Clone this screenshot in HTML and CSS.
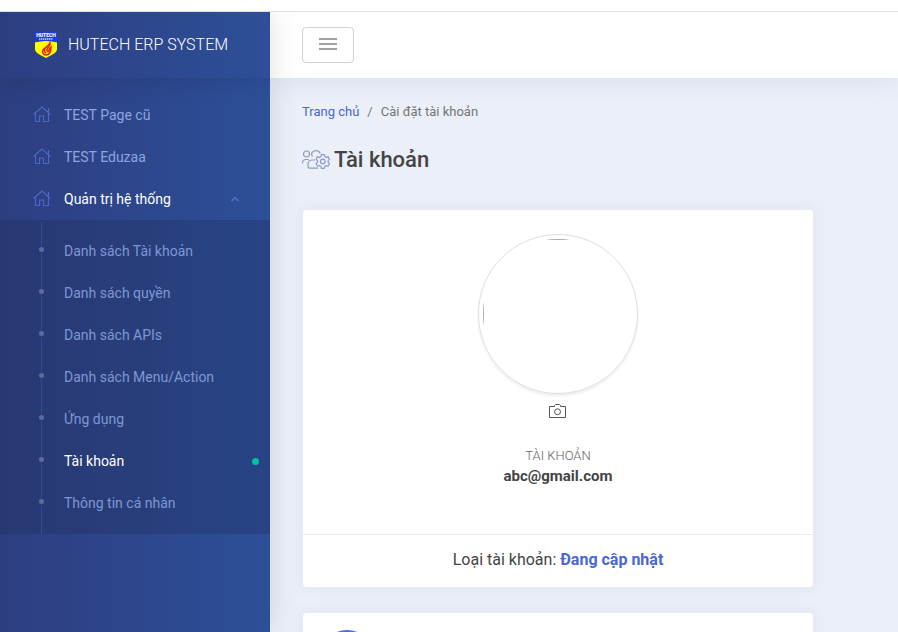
FILE: index.html
```html
<!DOCTYPE html>
<html lang="vi">
<head>
<meta charset="utf-8">
<meta name="viewport" content="width=device-width, initial-scale=1">
<title>Tài khoản</title>
<link rel="stylesheet" href="styles.css">
</head>
<body>
<svg class="sprite" aria-hidden="true">
  <symbol id="home" viewBox="0 0 18 18">
    <path d="M.5 8.500 9 1l8.500 7.500M2.500 7v8.500h4v-5.500h4v5.500h5V7M15.500 6.500V2" fill="none" stroke="currentColor" stroke-width="1.200"/>
  </symbol>
</svg>
<div class="strip"></div>
<div class="app">
  <aside class="sidebar">
    <a class="brand" href="#">
      <svg class="logo" viewBox="0 0 24 26" aria-hidden="true">
        <path d="M1 0h22v17c0 4-6 6.500-11 9-5-2.500-11-5-11-9z" fill="#ff0"/>
        <path d="M1 0h22l.5 1v9.500Q12 7.500.5 10.500V1z" fill="#1d3fd2"/>
        <text x="12" y="5" text-anchor="middle">HUTECH</text>
        <path d="M5 7h14" stroke="#fff" stroke-width="1.500" stroke-dasharray="1.500 .5" opacity=".75"/>
        <path d="M16 11c1 3-3 4-3 7 0 2 2 2 2 0 0-1 1-2 2-3 0 4-1 8-5 8-3 0-4-3-3-5 1-3 6-3 7-7zM12 15c-2 2-2 5 0 6" fill="none" stroke="#f21a10" stroke-width="1.500"/>
      </svg>
      <span>HUTECH ERP SYSTEM</span>
    </a>
    <nav>
      <ul class="menu">
        <li><a class="item" href="#"><svg class="home"><use href="#home"/></svg>TEST Page cũ</a></li>
        <li><a class="item" href="#"><svg class="home"><use href="#home"/></svg>TEST Eduzaa</a></li>
        <li>
          <a class="item open" href="#"><svg class="home"><use href="#home"/></svg>Quản trị hệ thống
            <svg class="caret" viewBox="0 0 8 6" aria-hidden="true"><path d="M.5 5 4 1.500 7.500 5" fill="none" stroke="currentColor" stroke-width="1.200"/></svg>
          </a>
          <ul class="submenu">
            <li><a href="#">Danh sách Tài khoản</a></li>
            <li><a href="#">Danh sách quyền</a></li>
            <li><a href="#">Danh sách APIs</a></li>
            <li><a href="#">Danh sách Menu/Action</a></li>
            <li><a href="#">Ứng dụng</a></li>
            <li><a class="active" href="#" aria-current="page">Tài khoản</a></li>
            <li><a href="#">Thông tin cá nhân</a></li>
          </ul>
        </li>
      </ul>
    </nav>
  </aside>
  <div class="page">
    <header class="topbar">
      <button class="toggle" type="button" aria-label="Menu">
        <svg viewBox="0 0 18 12" aria-hidden="true"><path d="M0 1h18M0 6h18M0 11h18" stroke="#a3a3a3" stroke-width="2"/></svg>
      </button>
    </header>
    <main class="content">
      <nav aria-label="Breadcrumb">
        <ol class="crumbs">
          <li><a href="#">Trang chủ</a></li>
          <li>Cài đặt tài khoản</li>
        </ol>
      </nav>
      <h1 class="title">
        <svg viewBox="0 0 28 20" aria-hidden="true" fill="none" stroke="#8b9cc8" stroke-width="1.200">
          <circle cx="4.500" cy="4" r="3"/>
          <path d="M.6 13.500v-1c0-2 1.500-3 3.500-3h2.500M10.500 6.500C8 3 11 .7 14 .7c2 0 3.500 1 4.200 2.800M13 10H10.500c-2.500 0-4.500 1.500-4.500 4v2.500c0 1 .5 1.600 1.500 1.600h8.500"/>
          <path d="M19.400 4.600h2.800l.6 2 1.300.7 2-.5 1.400 2.400-1.400 1.500v1.500l1.400 1.500-1.400 2.400-2-.5-1.300.7-.6 2h-2.800l-.6-2-1.300-.7-2 .5-1.400-2.400 1.400-1.500v-1.500l-1.400-1.500 1.400-2.400 2 .5 1.300-.7z"/>
          <circle cx="20.800" cy="11.400" r="2.300"/>
        </svg>
        Tài khoản
      </h1>
      <section class="card">
        <div class="profile">
          <div class="avatar"><div class="photo"></div></div>
          <button class="camera" type="button" aria-label="Camera">
            <svg viewBox="0 0 18 14" aria-hidden="true" fill="none" stroke="#555"><path d="M.5 2.500h5v-1l1-1h4l1 1v1h5v11h-16z"/><circle cx="8.500" cy="7.800" r="3"/></svg>
          </button>
          <div class="label">TÀI KHOẢN</div>
          <div class="email">abc@gmail.com</div>
        </div>
        <div class="kind">Loại tài khoản: <a href="#">Đang cập nhật</a></div>
      </section>
      <section class="card next"><div class="badge"></div></section>
    </main>
  </div>
</div>
</body>
</html>
```
FILE: styles.css
```css
* { box-sizing: border-box; }

body {
  margin: 0;
  height: 100vh;
  overflow: hidden;
  display: flex;
  flex-direction: column;
  background: #ebeff8;
  color: #444;
  font: 14px/20px Roboto, "Liberation Sans", sans-serif;
}

ul, ol { list-style: none; margin: 0; padding: 0; }
a { color: #4a67d6; text-decoration: none; }
button { font: inherit; cursor: pointer; }
.sprite { position: absolute; width: 0; height: 0; }

.strip {
  flex: none;
  height: 12px;
  background: #fff;
  border-bottom: 1px solid #e0e1e3;
}

.app { flex: 1; min-height: 0; display: flex; overflow: hidden; }

.sidebar {
  flex: none;
  width: 270px;
  position: relative;
  z-index: 1;
  background: linear-gradient(90deg, #2d3e80, #2d4f98);
  box-shadow: 0 0 28px rgba(0, 0, 0, 0.13);
}

.brand {
  display: flex;
  align-items: center;
  gap: 10px;
  height: 66px;
  padding: 0 32px 0 34px;
  color: #fff;
  font-size: 16px;
  font-weight: 300;
  box-shadow: 0 0 28px rgba(0, 0, 0, 0.13);
  clip-path: inset(0 0 -40px 0);
}
.logo { width: 24px; height: 26px; }
.logo text { fill: #fff; font-size: 5px; font-weight: 900; }

.menu { padding-top: 16px; }
.item {
  display: flex;
  align-items: center;
  height: 42px;
  padding: 0 31px 0 33px;
  color: #8ea6de;
}
.home { width: 18px; height: 18px; margin-right: 13px; color: #4a67c8; }
.item.open { color: #fff; }
.caret { width: 8px; height: 6px; margin-left: auto; color: #5876d8; }

.submenu {
  position: relative;
  padding: 10px 0;
  background: rgba(30, 40, 80, 0.27);
}
.submenu::before {
  content: "";
  position: absolute;
  top: 2px;
  bottom: 0;
  left: 41px;
  width: 1px;
  background: #344b92;
}
.submenu a {
  position: relative;
  display: flex;
  align-items: center;
  height: 42px;
  padding: 0 11px 0 64px;
  color: #7e97d3;
}
.submenu a::before {
  content: "";
  position: absolute;
  left: 39px;
  top: 17px;
  width: 5px;
  height: 5px;
  border-radius: 50%;
  background: #4e6bc8;
  box-shadow: 0 0 0 1px #3b3b3f;
}
.submenu .active { color: #fff; }
.submenu .active::after {
  content: "";
  width: 7px;
  height: 7px;
  margin-left: auto;
  border-radius: 50%;
  background: #00bfa5;
}

.page { flex: 1; min-width: 0; }

.topbar {
  display: flex;
  align-items: center;
  height: 66px;
  padding: 0 32px;
  background: #fff;
  box-shadow: 0 0 28px rgba(86, 100, 170, 0.14);
}
.toggle {
  display: flex;
  align-items: center;
  justify-content: center;
  width: 52px;
  height: 36px;
  padding: 0 0 2px;
  border: 1px solid #d3d3d3;
  border-radius: 4px;
  background: #fff;
}
.toggle svg { width: 18px; height: 12px; }

.content { padding: 24px 32px; }
.crumbs { display: flex; font-size: 13px; color: #757575; }
.crumbs li + li::before { content: "/"; padding: 0 8px; }

.title {
  display: flex;
  align-items: center;
  gap: 4px;
  margin: 22px 0 33px;
  font-size: 22px;
  line-height: 32px;
  font-weight: 500;
}
.title svg { width: 28px; height: 20px; }

.card {
  max-width: 512px;
  margin-bottom: 24px;
  border: 1px solid #e8ebf0;
  border-radius: 4px;
  background: #fff;
  box-shadow: 0 0 14px rgba(76, 95, 140, 0.09);
}
.profile {
  display: flex;
  flex-direction: column;
  align-items: center;
  padding: 24px 16px 48px;
}
.avatar {
  width: 160px;
  height: 160px;
  padding: 4px;
  border: 1px solid #dedfe5;
  border-radius: 50%;
  box-shadow: 0 2px 3px rgba(0, 0, 0, 0.08);
}
.photo {
  height: 100%;
  border-radius: 50%;
  background:
    linear-gradient(#aaa, #aaa) top / 100% 1px no-repeat,
    linear-gradient(#aaa, #aaa) left / 1px 100% no-repeat;
}
.camera {
  display: flex;
  margin: 10px 0 28px;
  padding: 0;
  border: 0;
  background: none;
}
.camera svg { width: 20px; height: 14px; }
.label { font-size: 13px; font-weight: 300; color: #666; }
.email { font-size: 15px; font-weight: 700; }
.kind {
  padding: 13px 16px 15px;
  border-top: 1px solid #ebebeb;
  text-align: center;
  font-size: 16px;
  line-height: 24px;
}
.kind a { font-weight: 700; }

.next { padding: 17px 16px; }
.badge { width: 56px; height: 56px; border-radius: 50%; background: #5470d6; }
```
